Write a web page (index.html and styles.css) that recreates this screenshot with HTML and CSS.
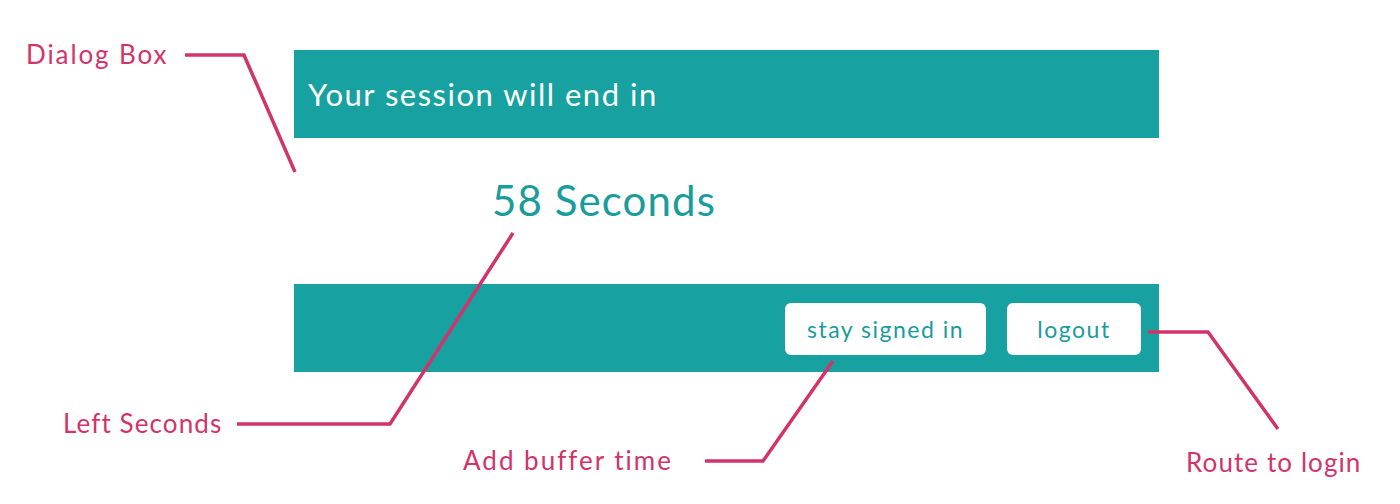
FILE: index.html
```html
<!DOCTYPE html>
<html lang="en">
<head>
<meta charset="utf-8">
<title>Session timeout dialog</title>
<link rel="stylesheet" href="styles.css">
</head>
<body>
<div class="canvas">
  <div class="dialog">
    <header class="dialog-head">Your session will end in</header>
    <div class="dialog-body"><span class="countdown">58 Seconds</span></div>
    <footer class="dialog-foot">
      <button class="btn btn-stay">stay signed in</button>
      <button class="btn btn-logout">logout</button>
    </footer>
  </div>

  <svg class="leaders" width="1400" height="504" viewBox="0 0 1400 504">
    <polyline points="185,55 244,55 295,172"/>
    <polyline points="237,424 390,424 513,233"/>
    <polyline points="705,461 763,461 833,361"/>
    <polyline points="1148,332 1208,332 1278,429"/>
  </svg>

  <span class="note note-dialog">Dialog Box</span>
  <span class="note note-left">Left Seconds</span>
  <span class="note note-buffer">Add buffer time</span>
  <span class="note note-route">Route to login</span>
</div>
</body>
</html>
```

FILE: styles.css
```css
html, body {
  margin: 0;
  padding: 0;
  background: #ffffff;
}

.canvas {
  position: relative;
  width: 1400px;
  height: 504px;
  overflow: hidden;
  font-family: "Lato", "Open Sans", sans-serif;
}

.dialog {
  display: flex;
  flex-direction: column;
  width: 865px;
  margin-left: 294px;
  padding-top: 50px;
}

.dialog-head {
  height: 88px;
  background: #18a1a1;
  color: #ffffff;
  display: flex;
  align-items: center;
  padding-left: 14px;
  font-size: 31px;
  letter-spacing: 1.5px;
}

.dialog-body {
  height: 146px;
  padding-left: 198px;
  box-sizing: border-box;
  padding-top: 37px;
}

.countdown {
  color: #189c9c;
  font-size: 42px;
  letter-spacing: 1.1px;
}

.dialog-foot {
  height: 88px;
  background: #18a1a1;
  display: flex;
  justify-content: flex-end;
  align-items: center;
  gap: 21px;
  padding-right: 18px;
}

.btn {
  height: 52px;
  border: none;
  border-radius: 6px;
  background: #ffffff;
  color: #189c9c;
  font-family: inherit;
  font-size: 23px;
  letter-spacing: 1.5px;
  padding: 0;
  margin-top: 2px;
}

.btn-stay { width: 201px; }
.btn-logout { width: 134px; }

.leaders {
  position: absolute;
  left: 0;
  top: 0;
}

.leaders polyline {
  fill: none;
  stroke: #d2336b;
  stroke-width: 3.5;
  stroke-linejoin: miter;
}

.note {
  position: absolute;
  color: #d2336b;
  font-size: 26px;
  line-height: 1;
  letter-spacing: 1.1px;
  white-space: nowrap;
}

.note-dialog { left: 26px; top: 41px; letter-spacing: 1.9px; }
.note-left { left: 63px; top: 410px; }
.note-buffer { left: 463px; top: 447px; letter-spacing: 2px; }
.note-route { left: 1186px; top: 449px; }
```
